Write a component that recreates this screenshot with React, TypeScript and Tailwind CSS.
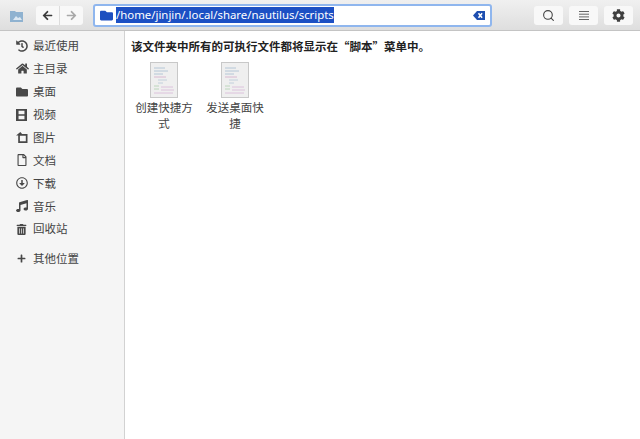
import { Search } from "lucide-react";
import {
  FaArrowLeft,
  FaArrowRight,
  FaCog,
  FaFolder,
  FaHistory,
  FaHome,
  FaMusic,
  FaPlus,
  FaRegArrowAltCircleDown,
  FaRegFile,
  FaTrashAlt,
} from "react-icons/fa";

function FilmIcon() {
  return (
    <svg width="11" height="12" viewBox="0 0 13 14">
      <path fillRule="evenodd" d="M0 0h13v14H0zM3 2v4h7V2zM3 8v4h7V8z" fill="#484848" />
    </svg>
  );
}

function PictureIcon() {
  return (
    <svg width="12" height="11" viewBox="0 0 14 13">
      <path d="M3.5 3.5h9v8.5h-9z" fill="none" stroke="#484848" strokeWidth="2" />
      <path d="M0 4l5-4 2 2-4 2z" fill="#484848" />
    </svg>
  );
}

const places = [
  { icon: <FaHistory size={12} color="#484848" />, label: "最近使用" },
  { icon: <FaHome size={13} color="#484848" />, label: "主目录" },
  { icon: <FaFolder size={12} color="#484848" />, label: "桌面" },
  { icon: <FilmIcon />, label: "视频" },
  { icon: <PictureIcon />, label: "图片" },
  { icon: <FaRegFile size={12} color="#484848" />, label: "文档" },
  { icon: <FaRegArrowAltCircleDown size={12} color="#484848" />, label: "下载" },
  { icon: <FaMusic size={12} color="#484848" />, label: "音乐" },
  { icon: <FaTrashAlt size={11} color="#484848" />, label: "回收站" },
];

function ScriptIcon() {
  return (
    <svg width="28" height="36" viewBox="0 0 28 36">
      <rect x="0.5" y="0.5" width="27" height="35" fill="#efefef" stroke="#c8c8c8" />
      <path d="M4 6h11M4 9h14M4 12h9" stroke="#b4c6d6" strokeWidth="1" />
      <path d="M4 15h12" stroke="#d8b8d0" strokeWidth="1" />
      <path d="M8 18h9M8 21h5" stroke="#c2d0dc" strokeWidth="1" />
      <path d="M4 24h5M4 27h5" stroke="#bcd6bc" strokeWidth="1" />
      <path d="M11 25h12M11 28h13M4 31h19" stroke="#dcc2dc" strokeWidth="1" />
    </svg>
  );
}

function DeleteIcon() {
  return (
    <svg width="12" height="9" viewBox="0 0 12 9">
      <path d="M4 0h8v9H4L0 4.5z" fill="#1f4fb0" />
      <path d="M5.5 2.2l3.6 4.6M9.1 2.2L5.5 6.8" stroke="#fff" strokeWidth="1.5" />
    </svg>
  );
}

function LinesIcon() {
  return (
    <svg width="10" height="9" viewBox="0 0 10 9">
      <path d="M0 .5h10M0 3.2h10M0 5.9h10M0 8.5h10" stroke="#666666" strokeWidth="1" />
    </svg>
  );
}

export default function App() {
  return (
    <div className="w-[640px] h-[439px] flex flex-col overflow-hidden bg-white font-['Noto_Sans_CJK_SC','Noto_Sans',sans-serif]">
      <header className="h-[31px] shrink-0 flex items-center pl-[10px] pr-[7px] border-b border-[#c4c4c4] bg-gradient-to-b from-[#f0f0f0] to-[#dedede]">
        <svg width="13" height="11" viewBox="0 0 13 11" className="mr-[13px] mt-[3px]">
          <path d="M0 0h5l1 1h7v10H0z" fill="#8fb2d0" />
          <path d="M3 9l3-4 2 2 2-1 2 3z" fill="#dce8f2" />
        </svg>
        <div className="flex mr-[10px]">
          <button className="w-[24px] h-[19px] flex items-center justify-center bg-[#f8f8f8] rounded-l-[3px] border-r border-[#dcdcdc]">
            <FaArrowLeft size={11} color="#3a3a3a" />
          </button>
          <button className="w-[23px] h-[19px] flex items-center justify-center bg-[#f8f8f8] rounded-r-[3px]">
            <FaArrowRight size={11} color="#a8a8a8" />
          </button>
        </div>
        <div className="w-[399px] h-[23px] flex items-center pl-[5px] pr-[5px] bg-white rounded-[3px] border-2 border-[#8fb6ee]">
          <FaFolder size={13} color="#1c4fc0" className="shrink-0" />
          <span className="ml-[3px] h-[16px] flex items-center bg-[#1c50c4] text-white text-[11.4px] leading-none font-['Noto_Sans',sans-serif]">
            /home/jinjin/.local/share/nautilus/scripts
          </span>
          <span className="ml-auto flex">
            <DeleteIcon />
          </span>
        </div>
        <div className="ml-auto flex gap-[6px]">
          <button className="w-[29px] h-[19px] flex items-center justify-center bg-[#f8f8f8] rounded-[3px]">
            <Search size={13} color="#444444" />
          </button>
          <button className="w-[29px] h-[19px] flex items-center justify-center bg-[#f8f8f8] rounded-[3px]">
            <LinesIcon />
          </button>
          <button className="w-[29px] h-[19px] flex items-center justify-center bg-[#f8f8f8] rounded-[3px]">
            <FaCog size={13} color="#3f3f3f" />
          </button>
        </div>
      </header>
      <div className="flex flex-1 min-h-0">
        <aside className="w-[125px] shrink-0 bg-[#f5f5f5] border-r border-[#d2d2d2] pt-[3.5px] pl-[16px] text-[11.5px] text-[#444444]">
          {places.map((place) => (
            <div key={place.label} className="h-[22.9px] flex items-center">
              <span className="w-[17px] flex">{place.icon}</span>
              <span>{place.label}</span>
            </div>
          ))}
          <div className="mt-[7px] h-[22.9px] flex items-center">
            <span className="w-[17px] flex pl-px">
              <FaPlus size={9} color="#484848" />
            </span>
            <span>其他位置</span>
          </div>
        </aside>
        <main className="flex-1 pt-[7px] pl-[6px]">
          <p className="text-[11.5px] leading-[17px] font-bold text-[#222222]">
            该文件夹中所有的可执行文件都将显示在“脚本”菜单中。
          </p>
          <div className="flex gap-[11px] mt-[7px] ml-[3px]">
            {["创建快捷方式", "发送桌面快捷"].map((name) => (
              <div key={name} className="w-[60px] flex flex-col items-center">
                <ScriptIcon />
                <span className="mt-[1px] text-[11.5px] leading-[16px] text-center text-[#444444]">
                  {name}
                </span>
              </div>
            ))}
          </div>
        </main>
      </div>
    </div>
  );
}
